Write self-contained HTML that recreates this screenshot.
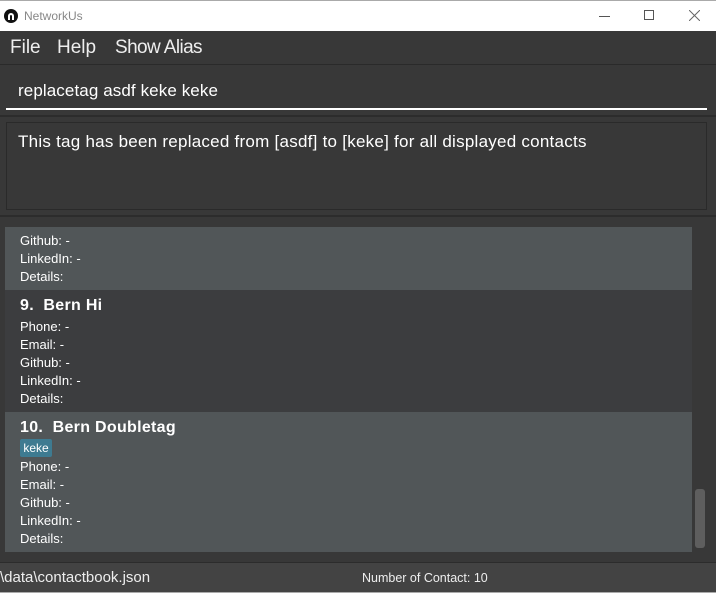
<!DOCTYPE html>
<html><head><meta charset="utf-8"><style>
*{margin:0;padding:0;box-sizing:border-box}
body{width:716px;height:593px;overflow:hidden;background:#383838;font-family:"Liberation Sans","DejaVu Sans",sans-serif;position:relative;color:#fff}
.abs{position:absolute}
.title{left:0;top:0;width:716px;height:31px;background:#fff;border-top:1px solid #aaa}
.field{font-size:13px;color:#fff;line-height:18px}
.menu{font-size:19px;color:#eee;top:37px}
</style></head><body>
<div class="abs title">
 <div class="abs" style="left:4px;top:8px;width:14px;height:14px;border-radius:50%;background:#111"></div>
 <div class="abs" style="left:8px;top:12px;width:6px;height:7px;border:2px solid #fff;border-bottom:none;border-radius:3px 3px 0 0"></div>
 <div class="abs" style="left:24px;top:8px;font-size:12px;color:#888">NetworkUs</div>
 <div class="abs" style="left:599px;top:15px;width:11px;height:1px;background:#555"></div>
 <div class="abs" style="left:644px;top:9px;width:10px;height:10px;border:1px solid #555"></div>
 <svg class="abs" style="left:689px;top:9px" width="11" height="11"><path d="M0 0L11 11M11 0L0 11" stroke="#666" stroke-width="1"/></svg>
</div>
<div class="abs" style="left:0;top:31px;width:716px;height:34px;background:#383838;border-bottom:1px solid #2a2a2a"></div>
<div class="abs menu" style="left:10px">File</div>
<div class="abs menu" style="left:57px">Help</div>
<div class="abs menu" style="left:115px;letter-spacing:-0.6px">Show Alias</div>
<div class="abs" style="left:18px;top:81px;font-size:17px;color:#fff;letter-spacing:0.1px">replacetag asdf keke keke</div>
<div class="abs" style="left:6px;top:108px;width:701px;height:2px;background:#fff"></div>
<div class="abs" style="left:0;top:115px;width:716px;height:2px;background:#2c2c2c"></div>
<div class="abs" style="left:6px;top:122px;width:701px;height:88px;border:1px solid #2a2a2a;background:#383838"></div>
<div class="abs" style="left:18px;top:132px;font-size:17px;color:#fff;letter-spacing:0.25px">This tag has been replaced from [asdf] to [keke] for all displayed contacts</div>
<div class="abs" style="left:0;top:215px;width:716px;height:2px;background:#2c2c2c"></div>
<div class="abs" style="left:5px;top:227px;width:687px;height:63px;background:#515658"></div>
<div class="abs field" style="left:20px;top:232px">Github: -<br>LinkedIn: -<br>Details:</div>
<div class="abs" style="left:5px;top:290px;width:687px;height:122px;background:#3c3d3f"></div>
<div class="abs" style="left:20px;top:297px;font-size:16px;font-weight:bold;letter-spacing:0.3px">9.&nbsp; Bern Hi</div>
<div class="abs field" style="left:20px;top:318px">Phone: -<br>Email: -<br>Github: -<br>LinkedIn: -<br>Details:</div>
<div class="abs" style="left:5px;top:412px;width:687px;height:140px;background:#515658"></div>
<div class="abs" style="left:20px;top:419px;font-size:16px;font-weight:bold;letter-spacing:0.3px">10.&nbsp; Bern Doubletag</div>
<div class="abs" style="left:20px;top:439px;width:32px;height:18px;background:#3e7b91;border-radius:2px;font-size:12px;line-height:18px;text-align:center">keke</div>
<div class="abs field" style="left:20px;top:458px">Phone: -<br>Email: -<br>Github: -<br>LinkedIn: -<br>Details:</div>
<div class="abs" style="left:695px;top:489px;width:10px;height:59px;background:#5e5e5e;border-radius:3px"></div>
<div class="abs" style="left:0;top:562px;width:716px;height:30px;background:#434343;border-top:1px solid #2c2c2c"></div>
<div class="abs" style="left:0;top:592px;width:716px;height:1px;background:#aaa"></div>
<div class="abs" style="left:0;top:569px;font-size:15px;color:#eee">\data\contactbook.json</div>
<div class="abs" style="left:362px;top:571px;font-size:12.5px;color:#eee">Number of Contact: 10</div>
</body></html>
